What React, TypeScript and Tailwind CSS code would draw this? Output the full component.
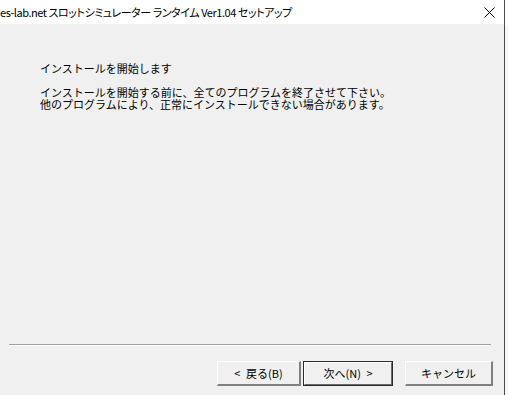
import React from 'react';

const font = "font-['Noto_Sans_CJK_JP','Noto_Sans',sans-serif]";

interface WizardButtonProps {
  label: string;
  isDefault?: boolean;
  width: string;
}

const WizardButton: React.FC<WizardButtonProps> = ({ label, isDefault, width }) => {
  if (isDefault) {
    // default button gets an extra dark outline
    return (
      <div className={`${width} h-[25px] border border-[#2b2b2b] flex`}>
        <div className="flex-1 bg-[#f0f0f0] border-t border-l border-white border-b border-r border-b-[#696969] border-r-[#696969] flex items-center justify-center text-[11px] leading-none text-black whitespace-pre">
          {label}
        </div>
      </div>
    );
  }
  return (
    <div className={`${width} h-[25px] bg-[#f0f0f0] border-t border-l border-white border-b-2 border-r-2 border-b-[#808080] border-r-[#808080] flex items-center justify-center text-[11px] leading-none text-black whitespace-pre`}>
      {label}
    </div>
  );
};

export default function App() {
  return (
    <div className={`w-[508px] h-[395px] flex bg-white overflow-hidden ${font}`}>
      <div className="w-[505px] h-full flex flex-col border-r border-[#4a4a4a]">
        <div className="h-[24px] bg-white flex items-center justify-between">
          <span className="text-[11px] leading-none text-black whitespace-nowrap tracking-[-0.45px] [font-feature-settings:'palt']">
            es-lab.net スロットシミュレーター ランタイム Ver1.04 セットアップ
          </span>
          <svg width="11" height="11" viewBox="0 0 11 11" className="mr-[9px]">
            <path d="M0.5 0.5 L10.5 10.5 M10.5 0.5 L0.5 10.5" stroke="#000" strokeWidth="1" />
          </svg>
        </div>

        <div className="flex-1 bg-[#f0f0f0] flex flex-col">
          <div className="pl-[40px] pt-[38px] text-[11px] leading-[12px] text-black">
            <p>インストールを開始します</p>
            <p className="mt-[12px]">
              インストールを開始する前に、全てのプログラムを終了させて下さい。
              <br />
              他のプログラムにより、正常にインストールできない場合があります。
            </p>
          </div>

          <div className="flex-1" />

          <div className="ml-[9px] mr-[13px] border-t border-[#a0a0a0] border-b border-b-white" />

          <div className="flex justify-end pr-[11px] pt-[15px] pb-[9px]">
            <WizardButton label={'<\u2002戻る(B)'} width="w-[84px]" />
            <div className="w-[2px]" />
            <WizardButton label={'次へ(N)\u2002>'} width="w-[90px]" isDefault />
            <div className="w-[12px]" />
            <WizardButton label="キャンセル" width="w-[88px]" />
          </div>
        </div>
      </div>
      <div className="flex-1 flex flex-col">
        <div className="h-[25px] bg-white" />
        <div className="flex-1 bg-[#f7f7f7]" />
      </div>
    </div>
  );
}
